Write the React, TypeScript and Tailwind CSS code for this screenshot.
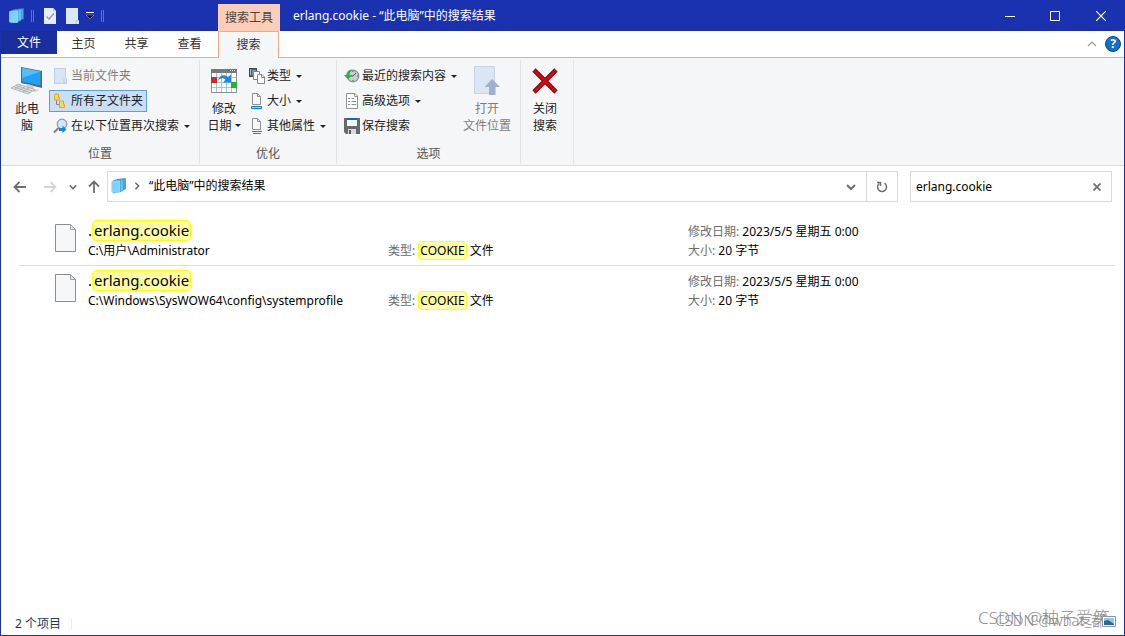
import { useState } from 'react'
import type { ReactNode } from 'react'

interface IconProps {
  className?: string
}

/* ---------- Icons ---------- */

function FolderStackIcon({ className }: IconProps) {
  return (
    <svg className={className} width="16" height="16" viewBox="0 0 16 16" aria-hidden="true">
      <path d="M6 1.5L14.5 .5V11L6 13Z" fill="#4aa9ea" stroke="#1a7fcb" strokeWidth=".6" />
      <path d="M4 2L12 1.2V12.5L4 14.5Z" fill="#8ad6ff" stroke="#2488d6" strokeWidth=".6" />
      <path d="M2 2.500L10 2V13.500L2 15Z" fill="#62c1fb" stroke="#2488d6" strokeWidth=".6" />
      <path d="M.5 3.500L8.500 3V14.500L.5 14Z" fill="#7ed2ff" stroke="#a9e1ff" strokeWidth=".6" />
    </svg>
  )
}

function CheckPageIcon() {
  return (
    <svg width="12" height="16" viewBox="0 0 12 16" aria-hidden="true">
      <path d="M0 0H9L12 3V16H0Z" fill="#e8effa" />
      <path d="M9 0V3H12" fill="#b9c8e0" />
      <path d="M2.500 8.500L5 11L10 5.500" fill="none" stroke="#8a9bb8" strokeWidth="1.300" />
    </svg>
  )
}

function BlankPageIcon() {
  return (
    <svg width="14" height="16" viewBox="0 0 14 16" aria-hidden="true">
      <path d="M0 0H12V12H13V16H0Z" fill="#dde8f7" />
      <path d="M10 16V12.500H13" fill="none" stroke="#b5c8e4" />
    </svg>
  )
}

function ComputerIcon() {
  return (
    <svg width="32" height="30" viewBox="0 0 32 30" aria-hidden="true">
      <path d="M10 1L31 5V22L10 17Z" fill="#5b6670" />
      <path d="M11 2L29.500 5.500V19.500L11 15.500Z" fill="#1ea1f7" />
      <path d="M11 2L29.500 5.500L11 12Z" fill="#55bdfb" />
      <path d="M17 18L23 20L22 23L28 24L24 26L14 23Z" fill="#c9ced3" />
      <path d="M7 18L24 23.500L17 28L0 22Z" fill="#dfe2e5" stroke="#9ea4a9" strokeWidth=".7" />
      <path d="M5 19.500L21 25M3 21L19 26.500M10 19L4 23M14 20.500L8 24.500M18 22L12 26" stroke="#a3a9ae" strokeWidth=".8" />
    </svg>
  )
}

function CurrentFolderIcon() {
  return (
    <svg width="16" height="16" viewBox="0 0 16 16" aria-hidden="true">
      <path d="M1.500 .5H12.500V10.500H13.500V15.500H1.500Z" fill="#d9e4f4" stroke="#c3cfe4" />
      <path d="M11 15V11" stroke="#b8c6df" />
    </svg>
  )
}

function SubFoldersIcon() {
  return (
    <svg width="16" height="16" viewBox="0 0 16 16" aria-hidden="true">
      <path d="M3.500 7V11.500H7" fill="none" stroke="#7b8794" />
      <path d="M1.500 1H5.500V4.500H6.500V7H1.500Z" fill="#fbd75f" stroke="#dfa726" />
      <path d="M6.500 8H10.500V11.500H11.500V14.500H6.500Z" fill="#fbd75f" stroke="#dfa726" />
    </svg>
  )
}

function SearchAgainIcon() {
  return (
    <svg width="16" height="16" viewBox="0 0 16 16" aria-hidden="true">
      <path d="M6 9.500L1 14.500" stroke="#76818c" strokeWidth="2" />
      <circle cx="9" cy="6" r="4.800" fill="#cde8f8" stroke="#8c9ba8" strokeWidth="1.200" />
      <path d="M6 10H9.500V7.500L13.500 11.500L9.500 15V13H6Z" fill="#1b87d8" />
    </svg>
  )
}

function CalendarIcon() {
  return (
    <svg width="26" height="24" viewBox="0 0 26 24" aria-hidden="true">
      <rect x=".5" y=".5" width="25" height="23" fill="#fff" stroke="#8b8f93" />
      <path d="M5.500 4V23M10.500 4V23M15.500 4V23M20.500 4V23M1 8.500H25M1 13.500H25M1 18.500H25" stroke="#8ccaf0" />
      <path d="M0 0H26V4H0Z" fill="#74797d" />
      <path d="M19 1.500H20M21 1.500H22M23 1.500H24" stroke="#fff" />
      <path d="M7 11.500C8.500 5.500 13.500 5 17 8L20 5.500V13.500H12L14.500 10.500C12 8.500 9.500 9 7 11.500Z" fill="#2586d7" />
      <rect x="0" y="8" width="6" height="6" fill="#d9281e" />
      <rect x="20" y="13" width="6" height="6" fill="#1eb53a" />
    </svg>
  )
}

function TypeIcon() {
  return (
    <svg width="16" height="16" viewBox="0 0 16 16" aria-hidden="true">
      <rect x=".5" y=".5" width="7" height="8" fill="#5b6570" stroke="#41484f" />
      <path d="M1 2H2M1 4H2M1 6H2" stroke="#fff" />
      <rect x="3" y="2" width="4" height="5" fill="#7c94aa" />
      <path d="M4.500 3.500H10.500V11.500H4.500Z" fill="#fff" stroke="#858585" />
      <path d="M8.500 6.500H13L15.500 9V15.500H8.500Z" fill="#fff" stroke="#858585" />
      <path d="M12.500 6.500V9.500H15.500" fill="none" stroke="#858585" />
    </svg>
  )
}

function SizeIcon() {
  return (
    <svg width="16" height="16" viewBox="0 0 16 16" aria-hidden="true">
      <path d="M3.500 .5H8.500L11.500 3.500V11.500H3.500Z" fill="#f7f7f7" stroke="#909090" />
      <path d="M8.500 .5V3.500H11.500" fill="none" stroke="#909090" />
      <path d="M2.500 13.500H12.500V15.500H2.500Z" fill="#bfe3ff" stroke="#0f78d4" />
    </svg>
  )
}

function PropertiesIcon() {
  return (
    <svg width="16" height="16" viewBox="0 0 16 16" aria-hidden="true">
      <path d="M3.500 .5H8.500L11.500 3.500V11.500H3.500Z" fill="#f7f7f7" stroke="#909090" />
      <path d="M8.500 .5V3.500H11.500" fill="none" stroke="#909090" />
      <path d="M3 13.500H13M4 15.500H12" stroke="#2b7fd0" />
    </svg>
  )
}

function RecentIcon() {
  return (
    <svg width="16" height="16" viewBox="0 0 16 16" aria-hidden="true">
      <circle cx="9" cy="8" r="5.800" fill="#c9cdd0" stroke="#898e92" strokeWidth="1.200" />
      <path d="M9 8L12 5M9 8H5.500M9 3V4M9 12V13M13 8H14" stroke="#50565b" />
      <path d="M8 1.500C4 2 2.500 4.500 2.500 7H0L4 11.500L8 7H5.500C5.500 5 6 3.500 8 1.500Z" fill="#27b53a" />
    </svg>
  )
}

function AdvancedIcon() {
  return (
    <svg width="16" height="16" viewBox="0 0 16 16" aria-hidden="true">
      <path d="M2.500 .5H11L13.500 3V15.500H2.500Z" fill="#fff" stroke="#8f8f8f" />
      <path d="M10.500 .5V3.500H13.500" fill="none" stroke="#8f8f8f" />
      <path d="M4 5.500H6M4 8.500H6M4 11.500H6M7.500 8.500H12M7.500 11.500H12M7.500 5.500H10" stroke="#8a8a8a" />
    </svg>
  )
}

function SaveIcon() {
  return (
    <svg width="16" height="16" viewBox="0 0 16 16" aria-hidden="true">
      <path d="M0 0H16V16H2L0 14Z" fill="#65696d" />
      <path d="M3 0H13V8H3Z" fill="#f3f5f7" />
      <path d="M3 0H13V2H3Z" fill="#1467b8" />
      <path d="M4 11H12V16H4Z" fill="#d9dcdf" />
      <path d="M5 12H7V16H5Z" fill="#55595d" />
    </svg>
  )
}

function OpenLocationIcon() {
  return (
    <svg width="26" height="30" viewBox="0 0 26 30" aria-hidden="true">
      <path d="M.5 .5H20.500V27.500H.5Z" fill="#dbe6f5" stroke="#c7d4e8" />
      <path d="M18 13L26 21H21.500V29H15V21H10.500Z" fill="#9fb0cc" />
    </svg>
  )
}

function CloseSearchIcon() {
  return (
    <svg width="26" height="26" viewBox="0 0 26 26" aria-hidden="true">
      <path d="M2 2L24 24M24 2L2 24" stroke="#6d0a10" strokeWidth="4.600" />
      <path d="M2.500 2.500L23.500 23.500M23.500 2.500L2.500 23.500" stroke="#cf0a12" strokeWidth="2.800" />
    </svg>
  )
}

function FileIcon() {
  return (
    <svg width="22" height="29" viewBox="0 0 22 29" aria-hidden="true">
      <path d="M.5 .5H15.500L20.500 5.500V27.500H.5Z" fill="#f6f7f8" stroke="#8b8b8b" />
      <path d="M15.500 .5V5.500H20.500Z" fill="#e3e5e7" stroke="#a2a2a2" />
    </svg>
  )
}

function ArrowIcon({ className }: IconProps) {
  return (
    <svg className={className} width="14" height="12" viewBox="0 0 14 12" aria-hidden="true">
      <path d="M13 6H2M6.500 1L1.500 6L6.500 11" fill="none" stroke="currentColor" strokeWidth="1.800" />
    </svg>
  )
}

function Chevron({ className }: IconProps) {
  return (
    <svg className={className} width="10" height="10" viewBox="0 0 10 10" aria-hidden="true">
      <path d="M1 3L5 7L9 3" fill="none" stroke="currentColor" strokeWidth="2" />
    </svg>
  )
}

function Caret() {
  return (
    <svg className="ml-[3px]" width="6" height="3" viewBox="0 0 6 3" aria-hidden="true">
      <path d="M0 0H6L3 3Z" fill="#222" />
    </svg>
  )
}

/* ---------- Ribbon ---------- */

interface RibbonGroupProps {
  label: string
  className: string
  children: ReactNode
}

function RibbonGroup({ label, className, children }: RibbonGroupProps) {
  return (
    <section className={`flex flex-col border-r border-[#e0e2e4] ${className}`}>
      <div className="flex grow">{children}</div>
      <p className="h-[18px] text-center leading-4 text-[#555]">{label}</p>
    </section>
  )
}

interface SmallButtonProps {
  icon: ReactNode
  label: string
  menu?: boolean
  active?: boolean
  disabled?: boolean
}

function SmallButton({ icon, label, menu, active, disabled }: SmallButtonProps) {
  const state = active ? 'border-[#5c9fe0] bg-[#c9dff5]' : 'border-transparent'
  return (
    <button
      disabled={disabled}
      className={`flex h-[22px] items-center gap-[2px] border px-[3px] whitespace-nowrap ${state} ${disabled ? 'text-[#7d7d7d]' : 'text-[#222]'}`}
    >
      {icon}
      <span>{label}</span>
      {menu && <Caret />}
    </button>
  )
}

interface LargeButtonProps {
  icon: ReactNode
  lines: [string, string]
  menu?: boolean
  disabled?: boolean
  className: string
}

function LargeButton({ icon, lines, menu, disabled, className }: LargeButtonProps) {
  return (
    <button
      disabled={disabled}
      className={`flex flex-col items-center self-start whitespace-nowrap ${className} ${disabled ? 'text-[#7d7d7d]' : 'text-[#222]'}`}
    >
      <span className="flex h-[34px] items-center pb-1">{icon}</span>
      <span className="leading-[17px]">{lines[0]}</span>
      <span className="flex items-center leading-[17px]">
        {lines[1]}
        {menu && <Caret />}
      </span>
    </button>
  )
}

/* ---------- Results ---------- */

const files = [
  { path: 'C:\\用户\\Administrator', date: '2023/5/5 星期五 0:00', size: '20 字节' },
  { path: 'C:\\Windows\\SysWOW64\\config\\systemprofile', date: '2023/5/5 星期五 0:00', size: '20 字节' },
]

const tabs = ['主页', '共享', '查看']

export default function App() {
  const [query, setQuery] = useState('erlang.cookie')

  return (
    <div className="flex min-h-screen flex-col border border-t-0 border-[#1a32b0] bg-white font-['Noto_Sans','Noto_Sans_CJK_SC',sans-serif] text-xs text-black">
      {/* Title bar */}
      <header className="flex h-[31px] bg-[#1a32b0] text-white">
        <div className="flex w-[217px] items-center pl-2">
          <FolderStackIcon />
          <span className="ml-[6px] h-3 w-[3px] border-x border-[#5f70c8]" />
          <div className="ml-[10px] flex items-center gap-[10px]">
            <button aria-label="属性"><CheckPageIcon /></button>
            <button aria-label="新建文件夹"><BlankPageIcon /></button>
          </div>
          <button aria-label="自定义快速访问工具栏" className="ml-[6px]">
            <svg width="8" height="7" viewBox="0 0 8 7">
              <path d="M0 .5H8" stroke="#fff" />
              <path d="M0 3H8L4 7Z" fill="#000" stroke="#aab4e4" strokeWidth=".5" />
            </svg>
          </button>
          <span className="ml-[7px] h-3 w-[3px] border-x border-[#5f70c8]" />
        </div>
        <div className="mt-1 flex w-[62px] items-center justify-center bg-[#fcceb8] text-[#444]">搜索工具</div>
        <h1 className="grow pl-[13px] leading-[31px]">erlang.cookie - “此电脑”中的搜索结果</h1>
        <div className="flex">
          <button aria-label="最小化" className="flex w-[45px] items-center justify-center">
            <svg width="10" height="10" viewBox="0 0 10 10"><path d="M0 5.500H10" stroke="#fff" /></svg>
          </button>
          <button aria-label="最大化" className="flex w-[45px] items-center justify-center">
            <svg width="10" height="10" viewBox="0 0 10 10"><path d="M.5 .5H9.500V9.500H.5Z" fill="none" stroke="#fff" /></svg>
          </button>
          <button aria-label="关闭" className="flex w-[47px] items-center justify-center">
            <svg width="10" height="10" viewBox="0 0 10 10"><path d="M0 0L10 10M10 0L0 10" stroke="#fff" strokeWidth="1.200" /></svg>
          </button>
        </div>
      </header>

      {/* Tabs */}
      <nav className="flex h-[27px] text-[#333]">
        <div className="w-14 border-b border-[#f9a77c]">
          <button className="h-[23px] w-full bg-[#1a2f9c] text-white">文件</button>
        </div>
        <div className="flex w-[161px] border-b border-[#f9a77c]">
          {tabs.map((tab) => (
            <button key={tab} className="w-[53px]">{tab}</button>
          ))}
        </div>
        <button className="w-[61px] border-x border-t border-[#f9a77c] bg-[#f5f6f7] pb-px">搜索</button>
        <div className="flex grow items-center justify-end gap-2 border-b border-[#f9a77c] pr-[3px]">
          <button aria-label="最小化功能区">
            <svg width="10" height="6" viewBox="0 0 10 6"><path d="M1 5L5 1L9 5" fill="none" stroke="#999" strokeWidth="1.200" /></svg>
          </button>
          <button aria-label="帮助" className="size-4 rounded-full border border-[#0a4a86] bg-[#0f6fd0] text-xs leading-[14px] font-bold text-white">
            ?
          </button>
        </div>
      </nav>

      {/* Ribbon */}
      <div className="flex h-[108px] border-b border-[#dadbdc] bg-[#f5f6f7] pt-[2px] pb-[1px]">
        <RibbonGroup label="位置" className="w-[199px]">
          <LargeButton icon={<ComputerIcon />} lines={['此电', '脑']} className="mt-[6px] ml-[10px] w-8" />
          <div className="mt-[5px] ml-[6px] flex flex-col items-start gap-[3px]">
            <SmallButton icon={<CurrentFolderIcon />} label="当前文件夹" disabled />
            <SmallButton icon={<SubFoldersIcon />} label="所有子文件夹" active />
            <SmallButton icon={<SearchAgainIcon />} label="在以下位置再次搜索" menu />
          </div>
        </RibbonGroup>
        <RibbonGroup label="优化" className="w-[137px]">
          <LargeButton icon={<CalendarIcon />} lines={['修改', '日期']} menu className="mt-[6px] ml-[6px] w-[36px]" />
          <div className="mt-[5px] ml-[3px] flex flex-col items-start gap-[3px]">
            <SmallButton icon={<TypeIcon />} label="类型" menu />
            <SmallButton icon={<SizeIcon />} label="大小" menu />
            <SmallButton icon={<PropertiesIcon />} label="其他属性" menu />
          </div>
        </RibbonGroup>
        <RibbonGroup label="选项" className="w-[184px]">
          <div className="mt-[5px] ml-[3px] flex w-[121px] flex-col items-start gap-[3px]">
            <SmallButton icon={<RecentIcon />} label="最近的搜索内容" menu />
            <SmallButton icon={<AdvancedIcon />} label="高级选项" menu />
            <SmallButton icon={<SaveIcon />} label="保存搜索" />
          </div>
          <LargeButton icon={<OpenLocationIcon />} lines={['打开', '文件位置']} disabled className="mt-[6px] w-[52px]" />
        </RibbonGroup>
        <RibbonGroup label="" className="w-[53px]">
          <LargeButton icon={<CloseSearchIcon />} lines={['关闭', '搜索']} className="mt-[6px] w-12" />
        </RibbonGroup>
      </div>

      {/* Address bar */}
      <div className="flex h-10 items-center pt-[1px] pr-3 pl-3 text-[#707070]">
        <button aria-label="后退"><ArrowIcon /></button>
        <button aria-label="前进" className="ml-4 text-[#d5d5d5]"><ArrowIcon className="rotate-180" /></button>
        <button aria-label="最近浏览的位置" className="ml-3"><Chevron className="size-2" /></button>
        <button aria-label="向上" className="ml-[10px]"><ArrowIcon className="rotate-90" /></button>
        <div className="ml-[6px] flex h-[31px] grow border border-[#d9d9d9]">
          <div className="flex grow items-center gap-[6px] pb-[2px] pl-[3px]">
            <FolderStackIcon />
            <Chevron className="size-2 -rotate-90" />
            <span className="pl-[2px] text-black">“此电脑”中的搜索结果</span>
          </div>
          <button aria-label="展开地址栏" className="w-7 pl-2"><Chevron /></button>
          <button aria-label="刷新" className="flex w-[31px] items-center justify-center border-l border-[#d9d9d9]">
            <svg width="12" height="12" viewBox="0 0 12 12">
              <path d="M8.500 2.200A4.500 4.500 0 1 1 3.200 2.500" fill="none" stroke="currentColor" strokeWidth="1.500" />
              <path d="M1 1.500H4.500V5" fill="none" stroke="currentColor" strokeWidth="1.500" />
            </svg>
          </button>
        </div>
        <form className="ml-3 flex h-[31px] w-[202px] border border-[#d9d9d9]" onSubmit={(e) => e.preventDefault()}>
          <input
            aria-label="搜索"
            value={query}
            onChange={(e) => setQuery(e.target.value)}
            className="min-w-0 grow pl-[5px] text-black outline-none"
          />
          <button type="button" aria-label="清除" onClick={() => setQuery('')} className="pr-[10px]">
            <svg width="8" height="8" viewBox="0 0 8 8"><path d="M.5 .5L7.500 7.500M7.500 .5L.5 7.500" stroke="currentColor" strokeWidth="1.800" /></svg>
          </button>
        </form>
      </div>

      {/* File list */}
      <main className="grow pt-[10px] pr-[9px] pl-[18px]">
        <ul>
          {files.map((file) => (
            <li key={file.path} className="flex h-[50px] border-b border-[#dcdcdc] pl-[35px] last:border-b-0">
              <div className="mt-2 w-[34px] pl-px"><FileIcon /></div>
              <div className="w-[300px] pt-1">
                <p className="flex h-[21px] text-[15px] leading-5">
                  .<mark className="rounded-sm border border-[#ffff00] bg-[#ffffa8] px-px leading-[18px] text-black">erlang.cookie</mark>
                </p>
                <p className="leading-5">{file.path}</p>
              </div>
              <p className="w-[300px] pt-[25px] leading-5">
                <span className="text-[#6d6d6d]">类型:</span>{' '}
                <mark className="rounded-sm border border-[#ffff00] bg-[#ffffa8] px-px text-black">COOKIE</mark> 文件
              </p>
              <div className="pt-[6px] leading-[19px]">
                <p><span className="text-[#6d6d6d]">修改日期: </span>{file.date}</p>
                <p><span className="text-[#6d6d6d]">大小: </span>{file.size}</p>
              </div>
            </li>
          ))}
        </ul>
      </main>

      {/* Status bar */}
      <footer className="relative flex h-6 items-center pt-px pl-[14px] text-[#1e395b]">
        <span>2 个项目</span>
        <span className="ml-[10px] h-3 w-px bg-[#ececec]" />
        <span className="absolute right-[14px] bottom-[7px] text-[17px] leading-5 font-light whitespace-nowrap text-[#8c8c8c]">CSDN @柚子爱笑</span>
        <span className="absolute right-[18px] bottom-[5px] text-[15px] leading-5 font-light whitespace-nowrap text-[#8c8c8c]">CSDN @what_都</span>
        <svg className="absolute right-2 bottom-2" width="14" height="11" viewBox="0 0 14 11" aria-hidden="true">
          <path d="M.5 .5H13.500V10.500H.5Z" fill="#fff" stroke="#8d9299" />
          <path d="M2 2H12V9H2Z" fill="#8cc8f0" />
          <path d="M2 5L6 4L12 8V9H2Z" fill="#27659c" />
        </svg>
      </footer>
    </div>
  )
}
